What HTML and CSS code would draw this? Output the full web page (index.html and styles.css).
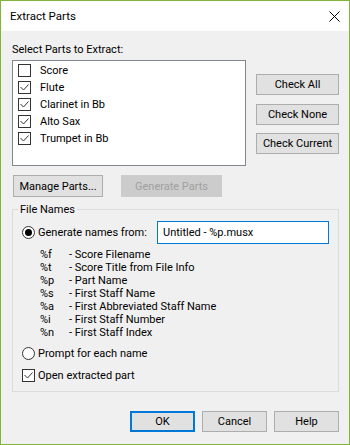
FILE: index.html
```html
<!DOCTYPE html>
<html>
<head>
<meta charset="utf-8">
<link rel="stylesheet" href="styles.css">
</head>
<body>
<div class="window">
  <div class="titlebar">
    <span class="title">Extract Parts</span>
    <svg class="close" width="11" height="11" viewBox="0 0 11 11"><path d="M0.5 0.5 L10.5 10.5 M10.5 0.5 L0.5 10.5" stroke="#000" stroke-width="1" fill="none"/></svg>
  </div>
  <div class="body">
    <div class="label">Select Parts to Extract:</div>
    <div class="top-row">
      <div class="listbox">
        <div class="item"><span class="cb"></span>Score</div>
        <div class="item"><span class="cb"><svg width="11" height="11" viewBox="0 0 11 11"><polyline points="1.5,5 4.5,8 9.5,2.5" fill="none" stroke="#333" stroke-width="1"/></svg></span>Flute</div>
        <div class="item"><span class="cb"><svg width="11" height="11" viewBox="0 0 11 11"><polyline points="1.5,5 4.5,8 9.5,2.5" fill="none" stroke="#333" stroke-width="1"/></svg></span>Clarinet in Bb</div>
        <div class="item"><span class="cb"><svg width="11" height="11" viewBox="0 0 11 11"><polyline points="1.5,5 4.5,8 9.5,2.5" fill="none" stroke="#333" stroke-width="1"/></svg></span>Alto Sax</div>
        <div class="item"><span class="cb"><svg width="11" height="11" viewBox="0 0 11 11"><polyline points="1.5,5 4.5,8 9.5,2.5" fill="none" stroke="#333" stroke-width="1"/></svg></span>Trumpet in Bb</div>
      </div>
      <div class="side">
        <button class="btn side-btn">Check All</button>
        <button class="btn side-btn">Check None</button>
        <button class="btn side-btn">Check Current</button>
      </div>
    </div>
    <div class="mid-row">
      <button class="btn manage">Manage Parts...</button>
      <button class="btn gen">Generate Parts</button>
    </div>
    <div class="group">
      <div class="legend">File Names</div>
      <div class="gen-row">
        <span class="radio checked"></span>
        <span class="gen-label">Generate names from:</span>
        <div class="textbox">Untitled - %p.musx</div>
      </div>
      <div class="codes">
        <span>%f</span><span>- Score Filename</span>
        <span>%t</span><span>- Score Title from File Info</span>
        <span>%p</span><span>- Part Name</span>
        <span>%s</span><span>- First Staff Name</span>
        <span>%a</span><span>- First Abbreviated Staff Name</span>
        <span>%i</span><span>- First Staff Number</span>
        <span>%n</span><span>- First Staff Index</span>
      </div>
      <div class="opt"><span class="radio"></span>Prompt for each name</div>
      <div class="opt"><span class="cb"><svg width="11" height="11" viewBox="0 0 11 11"><polyline points="1.5,5 4.5,8 9.5,2.5" fill="none" stroke="#333" stroke-width="1"/></svg></span>Open extracted part</div>
    </div>
    <div class="footer">
      <button class="btn foot ok">OK</button>
      <button class="btn foot">Cancel</button>
      <button class="btn foot">Help</button>
    </div>
  </div>
</div>
</body>
</html>
```
FILE: styles.css
```css
* { box-sizing: border-box; }
html, body { margin: 0; padding: 0; }
body {
  font-family: Roboto, "Noto Sans", sans-serif;
  font-size: 11px;
  color: #000;
  background: #f0f0f0;
  white-space: nowrap;
}
.window {
  width: 350px;
  height: 445px;
  border: 1px solid #80b53a;
  background: #f0f0f0;
  display: flex;
  flex-direction: column;
}
.titlebar {
  height: 30px;
  flex: none;
  background: #fff;
  display: flex;
  align-items: center;
  justify-content: space-between;
  padding: 0 9px 0 9px;
}
.title { line-height: 15px; font-size: 11.5px; }
.close { display: block; }
.body {
  padding: 0 10px 0 11px;
}
.label {
  margin-top: 11px;
  height: 15px;
  line-height: 15px;
}
.top-row {
  display: flex;
  margin-top: 3px;
}
.listbox {
  width: 234px;
  height: 106px;
  border: 1px solid #828790;
  background: #fff;
  padding: 1px 0 0 5px;
}
.item {
  display: flex;
  align-items: center;
  height: 17px;
  line-height: 15px;
}
.cb {
  width: 13px;
  height: 13px;
  flex: none;
  border: 1px solid #333;
  background: #fff;
  display: flex;
}
.cb svg { display: block; }
.item .cb { margin-right: 9px; }
.side {
  display: flex;
  flex-direction: column;
  gap: 8.5px;
  margin-left: 10px;
  padding-top: 14px;
}
.btn {
  font: inherit;
  color: #000;
  background: #e1e1e1;
  border: 1px solid #adadad;
  padding: 0;
  margin: 0;
  display: flex;
  align-items: center;
  justify-content: center;
  line-height: 15px;
}
.side-btn { width: 83px; height: 21px; }
.mid-row {
  display: flex;
  gap: 18px;
  margin-top: 9px;
  padding-left: 1px;
}
.mid-row .btn { height: 22px; }
.manage { width: 90px; }
.gen {
  width: 101px;
  background: #cccccc;
  border-color: #cccccc;
  color: #a0a0a0;
}
.group {
  margin-top: 12px;
  height: 183px;
  border: 1px solid #dcdcdc;
  padding-left: 9px;
}
.legend {
  width: fit-content;
  margin-top: -8px;
  margin-left: -4px;
  padding: 0 2px;
  background: #f0f0f0;
  line-height: 15px;
  height: 15px;
}
.gen-row {
  display: flex;
  align-items: center;
  height: 23px;
  margin-top: 4px;
}
.radio {
  width: 13px;
  height: 13px;
  flex: none;
  border-radius: 50%;
  border: 1px solid #333;
  background: #fff;
  margin-right: 3px;
  display: flex;
  align-items: center;
  justify-content: center;
}
.radio.checked::after {
  content: "";
  width: 7px;
  height: 7px;
  border-radius: 50%;
  background: #000;
}
.gen-label { width: 119px; flex: none; line-height: 15px; }
.textbox {
  width: 172px;
  height: 23px;
  border: 1px solid #0078d7;
  background: #fff;
  padding-left: 5px;
  display: flex;
  align-items: center;
  line-height: 15px;
}
.codes {
  margin-top: 4px;
  margin-left: 18px;
  display: grid;
  grid-template-columns: 29px auto;
  line-height: 13px;
}
.opt {
  display: flex;
  align-items: center;
  height: 15px;
  line-height: 15px;
  margin-top: 7px;
}
.opt .cb { margin-right: 3px; }
.footer {
  display: flex;
  justify-content: flex-end;
  gap: 7px;
  margin-top: 19px;
}
.foot { width: 65px; height: 21px; }
.ok { border: 2px solid #0078d7; }
```
